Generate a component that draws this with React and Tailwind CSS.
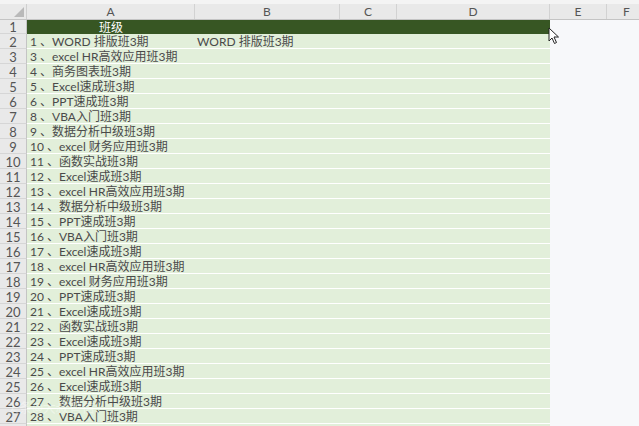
import React from "react";

const rows = [
  ["1 、WORD 排版班3期", "WORD 排版班3期"],
  ["3 、excel HR高效应用班3期"],
  ["4 、商务图表班3期"],
  ["5 、Excel速成班3期"],
  ["6 、PPT速成班3期"],
  ["8 、VBA入门班3期"],
  ["9 、数据分析中级班3期"],
  ["10 、excel 财务应用班3期"],
  ["11 、函数实战班3期"],
  ["12 、Excel速成班3期"],
  ["13 、excel HR高效应用班3期"],
  ["14 、数据分析中级班3期"],
  ["15 、PPT速成班3期"],
  ["16 、VBA入门班3期"],
  ["17 、Excel速成班3期"],
  ["18 、excel HR高效应用班3期"],
  ["19 、excel 财务应用班3期"],
  ["20 、PPT速成班3期"],
  ["21 、Excel速成班3期"],
  ["22 、函数实战班3期"],
  ["23 、Excel速成班3期"],
  ["24 、PPT速成班3期"],
  ["25 、excel HR高效应用班3期"],
  ["26 、Excel速成班3期"],
  ["27 、数据分析中级班3期"],
  ["28 、VBA入门班3期"],
];

const font = { fontFamily: 'Lato, "Noto Sans CJK SC", sans-serif' };

export default function App() {
  return (
    <div
      className="relative w-[639px] h-[426px] overflow-hidden bg-[#f7f8fa] text-[12px] text-[#4a4a4a] leading-none"
      style={font}
    >
      <div className="h-[4px] bg-[#f4f4f4]" />
      {/* column header */}
      <div className="flex h-[16px] bg-[#e9e9e9] border-b border-[#c4c4c4] text-[#555] text-[12px]">
        <div className="w-[27px] shrink-0 border-r border-[#cfcfcf] flex items-end justify-end pr-[2px] pb-[2px]">
          <svg width="10" height="10" viewBox="0 0 10 10">
            <polygon points="10,0 10,10 0,10" fill="#b9b9b9" />
          </svg>
        </div>
        {[
          ["A", 168],
          ["B", 145],
          ["C", 57],
          ["D", 153],
          ["E", 57],
          ["F", 40],
        ].map(([l, w]) => (
          <div
            key={l}
            className="shrink-0 border-r border-[#d2d2d2] flex items-center justify-center pt-[1px]"
            style={{ width: w }}
          >
            {l}
          </div>
        ))}
      </div>
      {/* row 1 */}
      <div className="flex h-[14px]">
        <div className="w-[27px] shrink-0 bg-[#e9e9e9] border-r border-[#c4c4c4] border-b border-b-[#d6d6d6] flex items-center justify-center text-[#555] text-[13px] pt-[2px]">
          1
        </div>
        <div className="w-[523px] shrink-0 bg-[#375623] flex">
          <div className="w-[168px] flex items-center justify-center text-white pt-[1px]">班级</div>
        </div>
      </div>
      {rows.map((r, i) => (
        <div key={i} className="flex h-[15px]">
          <div className="w-[27px] shrink-0 bg-[#e9e9e9] border-r border-[#c4c4c4] border-b border-b-[#d6d6d6] flex items-center justify-center text-[#555] text-[13px] pt-[2px]">
            {i + 2}
          </div>
          <div className="w-[523px] shrink-0 bg-[#e2efda] border-b border-white flex">
            <div className="w-[168px] shrink-0 pl-[3px] pt-[2px] flex items-center whitespace-pre">{r[0]}</div>
            <div className="w-[145px] shrink-0 pl-[2px] pt-[2px] flex items-center whitespace-pre">{r[1] || ""}</div>
          </div>
        </div>
      ))}
      {/* partially visible row 28 */}
      <div className="flex h-[15px]">
        <div className="w-[27px] shrink-0 bg-[#e9e9e9] border-r border-[#c4c4c4]" />
        <div className="w-[523px] shrink-0 bg-[#e2efda]" />
      </div>
      {/* watermark */}
      <div className="absolute left-[6px] top-[401px] text-[13px] text-white/40">头条@大叔管信</div>
      {/* cursor */}
      <svg className="absolute left-[548px] top-[27px]" width="12" height="18" viewBox="0 0 12 18">
        <path d="M1 1 L1 14 L4 11 L6.5 16.5 L8.5 15.5 L6 10 L10.5 10 Z" fill="#fff" stroke="#222" strokeWidth="1" strokeLinejoin="round" />
      </svg>
    </div>
  );
}
